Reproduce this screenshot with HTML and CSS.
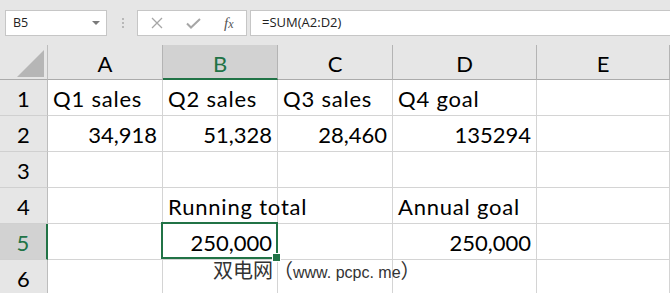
FILE: index.html
```html
<!DOCTYPE html>
<html>
<head>
<meta charset="utf-8">
<link rel="stylesheet" href="styles.css">
</head>
<body>
<div class="app">
  <div class="toolbar">
    <div class="namebox">
      <span class="nb-text">B5</span>
      <svg class="nb-arrow" width="8" height="4" viewBox="0 0 8 4"><polygon points="0,0 8,0 4,4" fill="#7a7a7a"/></svg>
    </div>
    <div class="dots"><i></i><i></i><i></i></div>
    <div class="fxbox">
      <svg class="ico" width="12" height="12" viewBox="0 0 12 12"><path d="M1 1 L11 11 M11 1 L1 11" stroke="#a6a6a6" stroke-width="1.3" fill="none"/></svg>
      <svg class="ico" width="15" height="11" viewBox="0 0 15 11"><path d="M1 5.5 L5 9.5 L14 1" stroke="#a6a6a6" stroke-width="2" fill="none"/></svg>
      <span class="fx"><span class="fx-f">f</span><span class="fx-x">x</span></span>
    </div>
    <div class="formula">=SUM(A2:D2)</div>
  </div>
  <div class="sheet">
    <div class="hdr corner"><svg width="27" height="27" viewBox="0 0 27 27"><polygon points="27,0 27,27 0,27" fill="#b6b6b6"/></svg></div>
    <div class="hdr col">A</div>
    <div class="hdr col sel-col">B</div>
    <div class="hdr col">C</div>
    <div class="hdr col">D</div>
    <div class="hdr col">E</div>

    <div class="rh">1</div>
    <div class="c txt">Q1 sales</div>
    <div class="c txt">Q2 sales</div>
    <div class="c txt">Q3 sales</div>
    <div class="c txt">Q4 goal</div>
    <div class="c"></div>

    <div class="rh">2</div>
    <div class="c num">34,918</div>
    <div class="c num">51,328</div>
    <div class="c num">28,460</div>
    <div class="c num">135294</div>
    <div class="c"></div>

    <div class="rh">3</div>
    <div class="c"></div>
    <div class="c"></div>
    <div class="c"></div>
    <div class="c"></div>
    <div class="c"></div>

    <div class="rh">4</div>
    <div class="c"></div>
    <div class="c txt">Running total</div>
    <div class="c"></div>
    <div class="c txt">Annual goal</div>
    <div class="c"></div>

    <div class="rh sel-row">5</div>
    <div class="c"></div>
    <div class="c num active">250,000</div>
    <div class="c"></div>
    <div class="c num">250,000</div>
    <div class="c"></div>

    <div class="rh">6</div>
    <div class="c"></div>
    <div class="c"></div>
    <div class="c"></div>
    <div class="c"></div>
    <div class="c"></div>
  </div>
  <div class="watermark"><span class="wm-cjk">双电网（</span>www. pcpc. me<span class="wm-cjk">）</span></div>
</div>
</body>
</html>
```

FILE: styles.css
```css
* { box-sizing: border-box; }
html, body { margin: 0; padding: 0; }
body {
  width: 670px;
  height: 293px;
  overflow: hidden;
  background: #e6e6e6;
}
.app {
  position: relative;
  width: 670px;
  height: 293px;
  overflow: hidden;
}
.toolbar {
  height: 45px;
  padding: 10px 0 0 5px;
  display: flex;
  align-items: flex-start;
  font-family: "Open Sans", "Noto Sans", sans-serif;
  color: #222;
}
.namebox {
  width: 102px;
  height: 26px;
  background: #fff;
  border: 1px solid #c6c6c6;
  display: flex;
  align-items: center;
  justify-content: space-between;
  padding: 0 6px 0 7px;
}
.nb-text { font-size: 12.5px; line-height: 14px; }
.nb-arrow { display: block; }
.dots {
  width: 2px;
  margin-left: 15px;
  margin-right: 13px;
  padding-top: 8px;
  display: flex;
  flex-direction: column;
  gap: 2px;
}
.dots i {
  display: block;
  width: 2px;
  height: 2px;
  background: #b8b8b8;
}
.fxbox {
  width: 110px;
  height: 26px;
  background: #fff;
  border: 1px solid #c6c6c6;
  display: flex;
  align-items: center;
  padding-left: 13px;
}
.fxbox .ico { display: block; }
.fxbox .ico:nth-child(2) { margin-left: 23px; }
.fx {
  margin-left: 23px;
  font-family: "Liberation Serif", serif;
  font-style: italic;
  color: #555;
  line-height: 16px;
}
.fx-f { font-size: 15px; }
.fx-x { font-size: 12px; }
.formula {
  flex: 1;
  margin-left: 3px;
  height: 26px;
  background: #fff;
  border: 1px solid #c6c6c6;
  border-right: none;
  padding-left: 11px;
  font-size: 13px;
  line-height: 23px;
}
.sheet {
  display: grid;
  grid-template-columns: 48px 115px 115px 115px 144px 1fr;
  grid-template-rows: 35px repeat(6, 36px);
  font-family: Lato, "Liberation Sans", sans-serif;
  font-size: 22px;
  line-height: 24px;
  color: #000;
  background: #fff;
}
.hdr {
  background: #e6e6e6;
  border-right: 1px solid #b4b4b4;
  border-bottom: 1px solid #ababab;
  display: flex;
  align-items: flex-end;
  justify-content: center;
  padding-bottom: 3px;
}
.hdr.corner {
  align-items: flex-end;
  justify-content: flex-end;
  padding: 0 3px 2px 0;
  border-right-color: #bdbdbd;
}
.hdr.corner svg { display: block; }
.hdr.col:last-child { border-right: none; }
.sel-col {
  background: #d2d2d2;
  color: #217346;
  border-bottom: 2px solid #217346;
  padding-bottom: 2px;
}
.rh {
  background: #e6e6e6;
  border-right: 1px solid #bdbdbd;
  border-bottom: 1px solid #d0d0d0;
  display: flex;
  align-items: flex-end;
  justify-content: center;
  padding-bottom: 4px;
}
.sel-row {
  background: #d2d2d2;
  color: #217346;
  border-right: 2px solid #217346;
}
.c {
  border-right: 1px solid #d4d4d4;
  border-bottom: 1px solid #d4d4d4;
  display: flex;
  align-items: flex-end;
  padding: 0 5px 4px 5px;
  white-space: nowrap;
}
.txt { letter-spacing: 0.8px; }
.num { justify-content: flex-end; }
.active { position: relative; }
.active::before {
  content: "";
  position: absolute;
  top: -2px;
  left: -2px;
  right: -1px;
  bottom: 0;
  border: 2px solid #217346;
}
.active::after {
  content: "";
  position: absolute;
  right: -4px;
  bottom: -3px;
  width: 7px;
  height: 7px;
  background: #217346;
  border: 1px solid #fff;
}
.watermark {
  position: absolute;
  left: 213px;
  top: 258px;
  font-family: "Liberation Sans", "Noto Sans CJK SC", sans-serif;
  font-size: 16px;
  line-height: 24px;
  color: #333;
  white-space: nowrap;
}
.watermark .wm-cjk {
  font-family: "Noto Sans CJK SC", sans-serif;
  font-size: 20px;
}
```
